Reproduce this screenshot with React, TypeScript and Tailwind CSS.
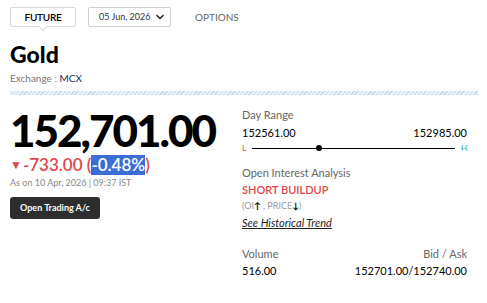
import { ChevronDown } from "lucide-react";

export default function App() {
  return (
    <div className="w-[487px] h-[303px] bg-white font-['Lato',sans-serif] text-black overflow-hidden">
      <div className="px-[10px] pt-[7px]">
        {/* Tabs */}
        <div className="flex items-center h-[20px]">
          <div className="relative flex items-center justify-center w-[66px] h-[20px] border border-[#d9d9d9] rounded-[2px] text-[10px] font-semibold tracking-tight">
            FUTURE
            <span className="absolute left-1/2 -bottom-[4px] w-[6px] h-[6px] -translate-x-1/2 rotate-45 bg-white border-r border-b border-[#d9d9d9]" />
          </div>
          <div className="ml-[12px] flex items-center justify-between w-[83px] h-[20px] border border-[#cfcfcf] rounded-[2px] pl-[10px] pr-[4px] text-[9px] text-[#333]">
            <span>05 Jun, 2026</span>
            <ChevronDown className="w-[12px] h-[12px] text-[#333]" strokeWidth={3.5} />
          </div>
          <span className="ml-[24px] text-[10px] text-[#666]">OPTIONS</span>
        </div>

        {/* Title */}
        <h1 className="mt-[12px] text-[23px] leading-[30px] font-black">Gold</h1>
        <p className="mt-[2px] text-[10px] leading-[14px] text-[#777]">
          Exchange : <span className="text-[#1c2a55]">MCX</span>
        </p>

        {/* Divider */}
        <div className="mt-[6px] h-[4px] w-[468px] bg-[repeating-linear-gradient(135deg,#c6d7ec_0,#c6d7ec_1px,#eaf1f9_1px,#eaf1f9_3px)]" />

        <div className="flex mt-[13px]">
          {/* Left column */}
          <div className="w-[232px]">
            <div className="text-[44px] leading-[44px] font-black tracking-[-2px]">152,701.00</div>
            <div className="mt-[3px] flex items-center text-[17px] leading-[20px] font-semibold text-[#e0474c]">
              <span className="text-[12px] mr-[1px]">▼</span>
              <span>-733.00 (</span>
              <span className="bg-[#3a6ed6] text-white">-0.48%</span>
              <span>)</span>
            </div>
            <p className="mt-[2px] text-[9px] leading-[12px] text-[#888]">As on 10 Apr, 2026 | 09:37 IST</p>
            <button className="mt-[8px] h-[22px] w-[90px] rounded-[3px] bg-[#2d2d2d] text-white text-[9px] font-bold">
              Open Trading A/c
            </button>
          </div>

          {/* Right column */}
          <div className="w-[225px] text-[11px]">
            <p className="text-[#666] leading-[14px]">Day Range</p>
            <div className="mt-[4px] flex justify-between leading-[14px]">
              <span>152561.00</span>
              <span>152985.00</span>
            </div>
            <div className="mt-[2px] flex items-center h-[12px]">
              <span className="text-[8px] text-[#e0474c] w-[10px]">L</span>
              <div className="relative flex-1 h-px bg-black">
                <span className="absolute left-[64px] -top-[2.5px] w-[6px] h-[6px] rounded-full bg-black" />
              </div>
              <span className="text-[8px] text-[#3aa7a0] w-[12px] text-right">H</span>
            </div>
            <p className="mt-[12px] text-[#666] leading-[14px]">Open Interest Analysis</p>
            <p className="mt-[3px] text-[#e0474c] font-semibold leading-[14px]">SHORT BUILDUP</p>
            <p className="mt-[2px] text-[9px] text-[#999] leading-[14px]">
              (OI<span className="text-black font-bold">↑</span> , PRICE<span className="text-black font-bold">↓</span>)
            </p>
            <p className="mt-[3px] italic underline text-[#222] leading-[14px]">See Historical Trend</p>
            <div className="mt-[17px] flex justify-between text-[#666] leading-[14px]">
              <span>Volume</span>
              <span>Bid / Ask</span>
            </div>
            <div className="mt-[3px] flex justify-between leading-[14px]">
              <span>516.00</span>
              <span>152701.00/152740.00</span>
            </div>
          </div>
        </div>
      </div>
    </div>
  );
}
